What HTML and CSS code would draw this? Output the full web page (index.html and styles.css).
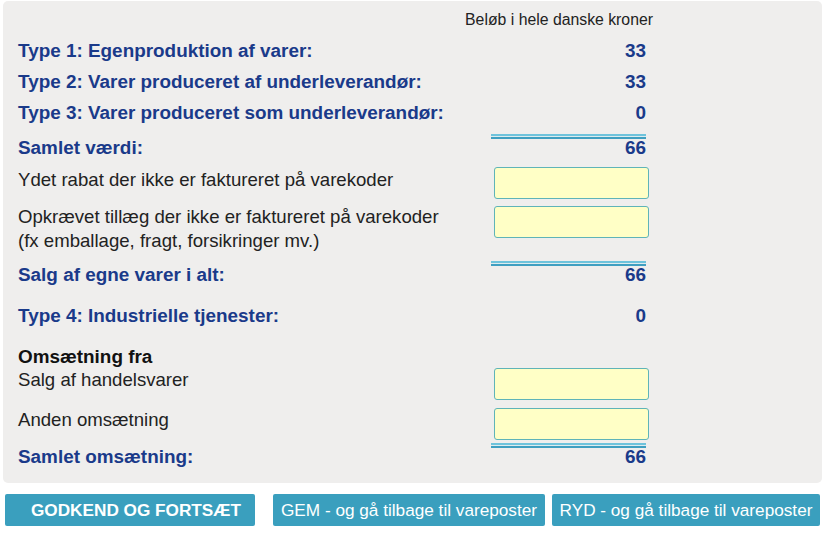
FILE: index.html
```html
<!DOCTYPE html>
<html lang="da">
<head>
<meta charset="utf-8">
<title>Omsætning</title>
<link rel="stylesheet" href="styles.css">
</head>
<body>
<div class="panel">
  <div class="head">Beløb i hele danske kroner</div>
  <div class="row type">
    <div class="lbl b">Type 1: Egenproduktion af varer:</div>
    <div class="num">33</div>
  </div>
  <div class="row type">
    <div class="lbl b">Type 2: Varer produceret af underleverandør:</div>
    <div class="num">33</div>
  </div>
  <div class="row type">
    <div class="lbl b">Type 3: Varer produceret som underleverandør:</div>
    <div class="num">0</div>
  </div>
  <div class="row sum sum-a">
    <div class="lbl b">Samlet værdi:</div>
    <div class="sumcell"><div class="dline"></div><div class="num">66</div></div>
  </div>
  <div class="row inrow in1">
    <div class="lbl">Ydet rabat der ikke er faktureret på varekoder</div>
    <div><input class="field" type="text"></div>
  </div>
  <div class="row inrow in2">
    <div class="lbl">Opkrævet tillæg der ikke er faktureret på varekoder<br>(fx emballage, fragt, forsikringer mv.)</div>
    <div><input class="field" type="text"></div>
  </div>
  <div class="row sum sum-b">
    <div class="lbl b">Salg af egne varer i alt:</div>
    <div class="sumcell"><div class="dline"></div><div class="num">66</div></div>
  </div>
  <div class="row type type4">
    <div class="lbl b">Type 4: Industrielle tjenester:</div>
    <div class="num">0</div>
  </div>
  <div class="row oms">
    <div class="lbl black">Omsætning fra</div>
    <div></div>
  </div>
  <div class="row inrow in3">
    <div class="lbl">Salg af handelsvarer</div>
    <div><input class="field" type="text"></div>
  </div>
  <div class="row inrow in4">
    <div class="lbl">Anden omsætning</div>
    <div><input class="field" type="text"></div>
  </div>
  <div class="row sum sum-c">
    <div class="lbl b">Samlet omsætning:</div>
    <div class="sumcell"><div class="dline"></div><div class="num">66</div></div>
  </div>
</div>
<div class="buttons">
  <button class="btn btn-main">GODKEND OG FORTSÆT</button>
  <button class="btn btn-gem">GEM - og gå tilbage til vareposter</button>
  <button class="btn btn-ryd">RYD - og gå tilbage til vareposter</button>
</div>
</body>
</html>
```

FILE: styles.css
```css
html, body {
  margin: 0;
  padding: 0;
  background: #ffffff;
}
body {
  font-family: "Liberation Sans", Arial, sans-serif;
  font-size: 18.6px;
  color: #222222;
}
.panel {
  margin: 1px 8px 0 3px;
  background: #efeeed;
  border-radius: 5px;
  padding: 4px 176px 17px 15px;
}
.row {
  display: grid;
  grid-template-columns: minmax(0, 1fr) 155px;
}
.head {
  height: 30px;
  line-height: 30px;
  font-size: 15.8px;
  color: #222;
  white-space: nowrap;
  text-align: right;
  margin-right: -7px;
}
.type {
  height: 31px;
  align-items: center;
}
.type4 {
  margin-top: 16px;
}
.lbl {
  line-height: 20px;
  white-space: nowrap;
}
.b {
  font-weight: bold;
  color: #1a3a8a;
  font-size: 18.9px;
}
.black {
  font-weight: bold;
  color: #111;
  font-size: 18.9px;
}
.num {
  font-weight: bold;
  color: #1a3a8a;
  text-align: right;
  line-height: 20px;
  font-size: 18.9px;
}
.sum {
  align-items: end;
}
.sum .lbl, .sum .num {
  line-height: 18px;
}
.sumcell {
  display: flex;
  flex-direction: column;
}
.dline {
  height: 1px;
  border-top: 2px solid #6ec3dc;
  border-bottom: 2px solid #3f9fc1;
  background: #dcecef;
}
.sum-a { padding-bottom: 3px; }
.sum-a .dline { margin-top: 6px; }
.sum-b .dline { margin-top: 8px; }
.sum-c .dline { margin-top: 3px; }
.field {
  box-sizing: border-box;
  display: block;
  width: 155px;
  height: 32px;
  margin: 0 -3px 0 3px;
  background: #ffffc6;
  border: 1px solid #5fb4b8;
  border-radius: 3px;
  padding: 0 6px;
  font: inherit;
}
.inrow {
  align-items: start;
}
.in1 { padding: 7px 0 3px; }
.in1 .lbl { padding-top: 3px; }
.in2 .field { margin-top: 4px; }
.in2 .lbl { padding-top: 3px; line-height: 24px; }
.oms {
  padding-top: 15px;
}
.oms .lbl { line-height: 22px; }
.in3 { padding-bottom: 4px; }
.in3 .lbl { line-height: 24px; }
.in4 .field { margin-top: 4px; }
.in4 .lbl { padding-top: 4px; line-height: 24px; }
.buttons {
  display: flex;
  margin: 11px 0 0 5px;
}
.btn {
  height: 32px;
  background: #3a9fbe;
  color: #ffffff;
  border: none;
  border-radius: 2px;
  font-family: "Liberation Sans", Arial, sans-serif;
  font-size: 17.2px;
  padding: 0;
  white-space: nowrap;
}
.btn-main {
  width: 250px;
  font-weight: bold;
  padding-left: 12px;
}
.btn-gem {
  width: 272px;
  margin-left: 18px;
}
.btn-ryd {
  width: 268px;
  margin-left: 7px;
}
```
